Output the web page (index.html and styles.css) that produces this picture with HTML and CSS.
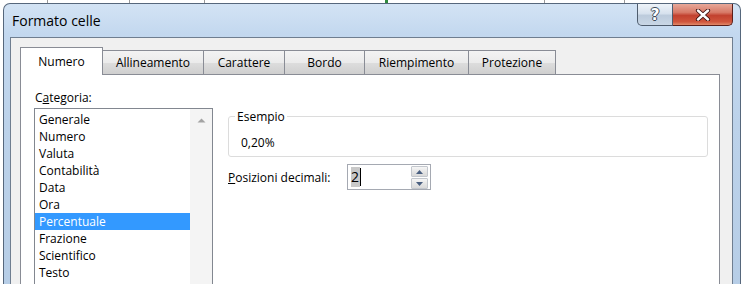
FILE: index.html
```html
<!DOCTYPE html>
<html lang="it">
<head>
<meta charset="utf-8">
<title>Formato celle</title>
<link rel="stylesheet" href="styles.css">
</head>
<body>
<div class="window">
  <div class="titlebar">
    <span class="title">Formato celle</span>
    <div class="caption-btns">
      <div class="cbtn help">?</div>
      <div class="cbtn close">
        <svg width="16" height="12" viewBox="0 0 16 12"><path d="M3 1.5 L13 10.5 M13 1.5 L3 10.5" stroke="#3a1010" stroke-width="4.2" stroke-linecap="round"/><path d="M3 1.5 L13 10.5 M13 1.5 L3 10.5" stroke="#ffffff" stroke-width="2.4" stroke-linecap="round"/></svg>
      </div>
    </div>
  </div>
  <div class="client">
    <div class="tabs">
      <div class="tab active t-num">Numero</div>
      <div class="tab t-all">Allineamento</div>
      <div class="tab t-car">Carattere</div>
      <div class="tab t-bor">Bordo</div>
      <div class="tab t-rie">Riempimento</div>
      <div class="tab t-pro">Protezione</div>
    </div>
    <div class="panel">
      <div class="left">
        <div class="label">C<u>a</u>tegoria:</div>
        <div class="listbox">
          <ul class="items">
            <li>Generale</li>
            <li>Numero</li>
            <li>Valuta</li>
            <li>Contabilità</li>
            <li>Data</li>
            <li>Ora</li>
            <li class="selected">Percentuale</li>
            <li>Frazione</li>
            <li>Scientifico</li>
            <li>Testo</li>
          </ul>
          <div class="scrollbar">
            <svg width="9" height="5" viewBox="0 0 9 5"><path d="M0.5 4.5 L4.5 0.5 L8.5 4.5 Z" fill="#a3a3a3"/></svg>
          </div>
        </div>
      </div>
      <div class="right">
        <fieldset class="group">
          <legend>Esempio</legend>
          <div class="sample">0,20%</div>
        </fieldset>
        <div class="decimals">
          <span class="dlabel"><u>P</u>osizioni decimali:</span>
          <div class="spin">
            <span class="value"><span class="sel">2</span><span class="caret"></span></span>
            <div class="spin-btns">
              <div class="sb"><svg width="7" height="4" viewBox="0 0 7 4"><path d="M0 4 L3.5 0 L7 4 Z" fill="#4a5f80"/></svg></div>
              <div class="sb"><svg width="7" height="4" viewBox="0 0 7 4"><path d="M0 0 L3.5 4 L7 0 Z" fill="#4a5f80"/></svg></div>
            </div>
          </div>
        </div>
      </div>
    </div>
  </div>
</div>
</body>
</html>
```

FILE: styles.css
```css
html, body {
  margin: 0;
  padding: 0;
  height: 284px;
  overflow: hidden;
}
body {
  font-family: "Open Sans", "Noto Sans", sans-serif;
  font-size: 12px;
  color: #000;
  background:
    linear-gradient(90deg, transparent 47px, #9a9a9a 47px, #9a9a9a 48px, transparent 48px,
      transparent 129px, #9a9a9a 129px, #9a9a9a 130px, transparent 130px,
      transparent 204px, #9a9a9a 204px, #9a9a9a 205px, transparent 205px,
      transparent 385px, #2f8a3e 385px, #2f8a3e 388px, transparent 388px,
      transparent 544px, #9a9a9a 544px, #9a9a9a 545px, transparent 545px,
      transparent 624px, #9a9a9a 624px, #9a9a9a 625px, transparent 625px) top left / 743px 3px no-repeat,
    #ffffff;
}
.window {
  margin: 3px 0 0 3px;
  width: 736px;
  height: 300px;
  overflow: hidden;
  border: 1px solid #56677c;
  border-bottom: none;
  border-radius: 7px 7px 0 0;
  background: linear-gradient(180deg, #d3e3f4 0px, #c3d8ef 30px, #bcd2ea 120px, #b6cde6 300px);
  display: flex;
  flex-direction: column;
}
.titlebar {
  height: 33px;
  flex-shrink: 0;
  display: flex;
  justify-content: space-between;
  padding-left: 8px;
  padding-right: 7px;
}
.title {
  align-self: center;
  font-size: 14px;
  color: #000;
}
.caption-btns {
  display: flex;
  align-self: flex-start;
}
.cbtn {
  height: 21px;
  border: 1px solid #4f5d6e;
  border-top: none;
  display: flex;
  align-items: center;
  justify-content: center;
}
.help {
  width: 34px;
  border-radius: 0 0 0 5px;
  background: linear-gradient(180deg, #eef3f9 0%, #d7e2ee 45%, #bccbdc 55%, #c9d7e6 100%);
  color: #fff;
  font-family: "DejaVu Sans", sans-serif;
  font-weight: bold;
  font-size: 15px;
  text-shadow: -1px 0 #3d4a5a, 1px 0 #3d4a5a, 0 -1px #3d4a5a, 0 1px #3d4a5a;
}
.close {
  width: 59px;
  border-left: none;
  border-color: #5a1f1a;
  border-radius: 0 0 5px 0;
  background: linear-gradient(180deg, #e8a899 0%, #d77a68 40%, #c2412f 55%, #d0563d 85%, #e08a6a 100%);
}
.client {
  margin: 0 7px 0 6px;
  flex: 1;
  min-height: 0;
  border: 1px solid #6f7e90;
  border-bottom: none;
  background: #f0f0f0;
  padding: 9px 0 0 9px;
  display: flex;
  flex-direction: column;
}
.tabs {
  display: flex;
  align-items: flex-end;
  height: 27px;
  flex-shrink: 0;
}
.tab {
  height: 24px;
  box-sizing: border-box;
  border: 1px solid #898c95;
  border-bottom: none;
  margin-left: -1px;
  background: linear-gradient(180deg, #f3f3f3 0%, #ebebeb 50%, #dddddd 51%, #cfcfcf 100%);
  display: flex;
  align-items: center;
  justify-content: center;
  color: #000;
}
.tab:first-child { margin-left: 0; }
.tab.active {
  height: 28px;
  margin-bottom: -1px;
  background: #ffffff;
  position: relative;
  z-index: 1;
  padding-bottom: 1px;
}
.t-num { width: 83px; }
.t-all { width: 102px; }
.t-car { width: 82px; }
.t-bor { width: 81px; }
.t-rie { width: 105px; }
.t-pro { width: 88px; }
.panel {
  width: 700px;
  box-sizing: border-box;
  flex: 1;
  min-height: 0;
  border: 1px solid #898c95;
  border-bottom: none;
  background: #ffffff;
  display: flex;
  padding: 14px 0 0 13px;
}
.left {
  width: 179px;
}
.label {
  height: 17px;
  line-height: 17px;
  margin-bottom: 2px;
  padding-left: 1px;
}
.listbox {
  border: 1px solid #828790;
  border-bottom: none;
  height: 200px;
  display: flex;
}
.items {
  list-style: none;
  margin: 0;
  padding: 2px 0 0 0;
  width: 155px;
}
.items li {
  height: 17px;
  line-height: 17px;
  padding-left: 4px;
}
.items li.selected {
  background: #3399ff;
  color: #fff;
}
.scrollbar {
  flex: 1;
  background: #f4f4f4;
  display: flex;
  justify-content: center;
  align-items: flex-start;
  padding-top: 9px;
}
.right {
  margin-left: 15px;
  margin-top: 19px;
  width: 480px;
}
.group {
  margin: 0;
  padding: 0 6px 5px 6px;
  border: 1px solid #dcdcdc;
  border-radius: 3px;
}
.group legend {
  padding: 0 2px;
  line-height: 17px;
}
.sample {
  margin-top: 9px;
  line-height: 17px;
  padding-left: 6px;
}
.decimals {
  display: flex;
  align-items: center;
  margin-top: 7px;
}
.dlabel {
  width: 119px;
}
.spin {
  width: 84px;
  height: 26px;
  box-sizing: border-box;
  border: 1px solid #a5a9b2;
  display: flex;
  justify-content: space-between;
  padding: 1px 2px 0 3px;
  background: #fff;
}
.value {
  display: flex;
  align-items: center;
  height: 22px;
  font-size: 14px;
}
.sel {
  background: #c8c8c8;
  line-height: 20px;
  padding: 0 1px 0 0;
}
.caret {
  width: 1px;
  height: 18px;
  background: #000;
}
.spin-btns {
  display: flex;
  flex-direction: column;
  gap: 1px;
}
.sb {
  width: 17px;
  height: 11px;
  box-sizing: border-box;
  border: 1px solid #c3c7cd;
  border-radius: 1px;
  background: linear-gradient(180deg, #f6f6f6 0%, #e6e6e6 50%, #d9d9d9 100%);
  display: flex;
  align-items: center;
  justify-content: center;
}
```
